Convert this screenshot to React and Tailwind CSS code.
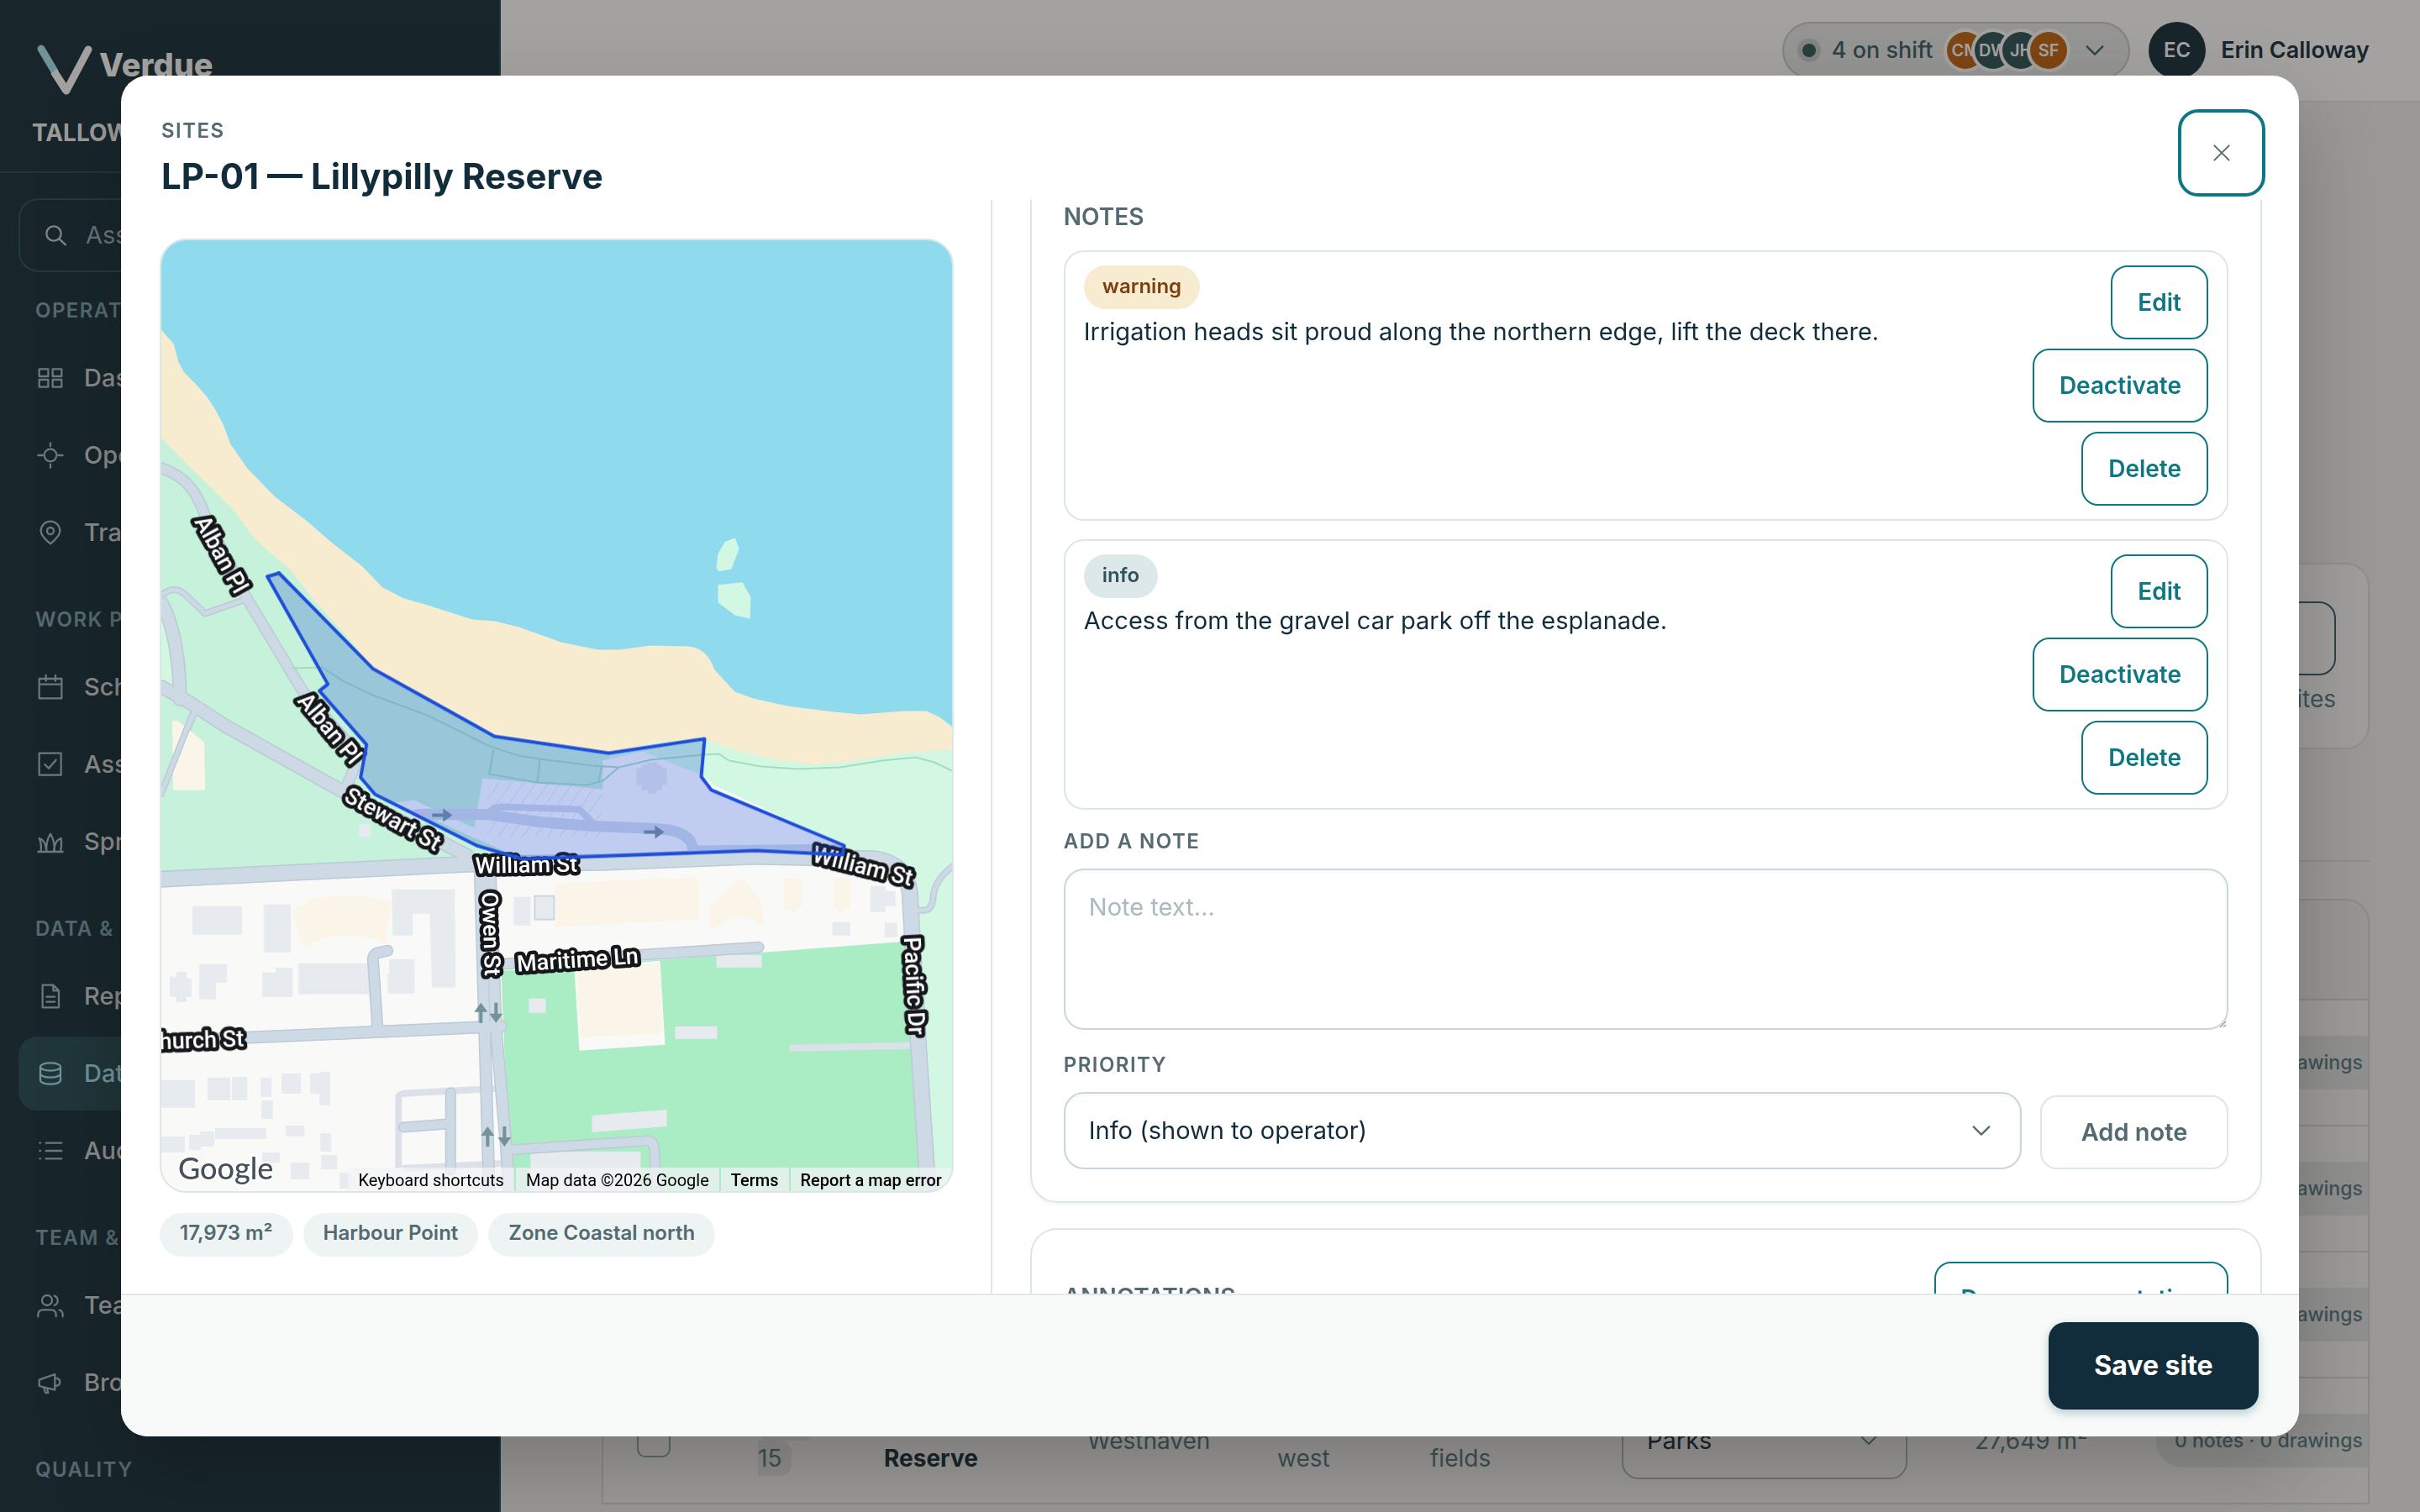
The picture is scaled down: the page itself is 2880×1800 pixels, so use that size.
import React, { useState } from 'react';

// Sidebar navigation, grouped by section.
const navGroups = [
  { label: 'OPERATIONS', items: [['Dashboard', 'grid'], ['Operators', 'target'], ['Tracking', 'pin']] },
  { label: 'WORK PLANNING', items: [['Schedule', 'calendar'], ['Assignments', 'check'], ['Spraying', 'grass']] },
  { label: 'DATA & REPORTS', items: [['Reports', 'file'], ['Data', 'database'], ['Audit', 'list']] },
  { label: 'TEAM & COMMS', items: [['Team', 'users'], ['Broadcasts', 'horn']] },
  { label: 'QUALITY', items: [] },
];

const iconPaths = {
  search: 'M10.5 4a6.5 6.5 0 1 0 0 13a6.5 6.5 0 0 0 0-13zM15.5 15.5L21 20.5',
  grid: 'M2 4h8v6.5H2zM14 4h8v6.5h-8zM2 13.5h8V20H2zM14 13.5h8V20h-8z',
  target: 'M12 6.5a5.5 5.5 0 1 0 0 11a5.5 5.5 0 0 0 0-11zM12 1v3M12 20v3M1 12h4M19 12h4',
  pin: 'M12 22C7 18 3.5 14.500 3.500 10.500a8.500 8.500 0 0 1 17 0C20.500 14.500 17 18 12 22zM12 7.500a3 3 0 1 0 0 6a3 3 0 0 0 0-6z',
  calendar: 'M2 4.500h20V22H2zM2 9.500h20M8 1.500v5M16.500 1.500v5',
  check: 'M2 2h19.500v19.500H2zM7 12l3.500 3.500L17 8',
  grass: 'M1 21h22M3.500 21C4 16 3.500 12 2 9c4 1 6 5 6.500 12M8.500 21c-.5-6 1-12 3.500-16c2.500 4 4 10 3.500 16M15 21c.5-7 3-11 6.500-12c.5 4 .5 8-.5 12',
  file: 'M5 2h9.500l5 5v15H5zM14.500 2v5h5M8.500 12.500h7.500M8.500 17h7.500',
  database: 'M3 6a9 3.500 0 0 1 18 0a9 3.500 0 0 1-18 0zM3 6v12c0 2 4 3.500 9 3.500s9-1.500 9-3.500V6M3 12c0 2 4 3.500 9 3.500s9-1.500 9-3.500',
  list: 'M8 5h14M8 12h14M8 19h14M2.500 5h.5M2.500 12h.5M2.500 19h.5',
  users: 'M9 3a4.500 4.500 0 1 0 0 9a4.500 4.500 0 0 0 0-9zM1 22v-2a4 4 0 0 1 4-4h8a4 4 0 0 1 4 4v2M15.500 3.500a4.500 4.500 0 0 1 0 8.500M23 22v-2a4 4 0 0 0-3-3.800',
  horn: 'M2 9.500L16 4.500v14L2 15zM16 8c3 0 4.500 1.500 4.500 3.500S19 15 16 15M6 16l1.500 5H10l-1-4',
  chevron: 'M5 8.500l7 7l7-7',
  close: 'M4 4l16 16M20 4L4 20',
};

function Icon({ name, className }) {
  return (
    <svg
      viewBox="0 0 24 24"
      className={className}
      fill="none"
      stroke="currentColor"
      strokeWidth="1.7"
      strokeLinecap="round"
      strokeLinejoin="round"
      aria-hidden="true"
    >
      <path d={iconPaths[name]} />
    </svg>
  );
}

function Sidebar() {
  return (
    <aside className="w-[596px] shrink-0 bg-[#18262c] border-r-2 border-[#1c373d] text-[#8a8e8e]">
      <div className="h-[206px] border-b-2 border-[#22353b] pl-[38px] pt-12">
        <div className="flex items-center">
          <svg viewBox="0 0 72 66" className="w-[72px] h-[66px]" fill="none" strokeLinecap="round" strokeLinejoin="round" strokeWidth="9">
            <path d="M41 60L67 11M41 60L28 40" stroke="#a3a2a1" />
            <path d="M11 10L27 37" stroke="#6f9299" strokeLinecap="round" />
            <path d="M26 37L41 60" stroke="#a3a2a1" strokeLinecap="butt" />
          </svg>
          <span className="ml-2 text-[38px] leading-[48px] font-extrabold text-[#a3a2a1] -mt-2">Verdue</span>
        </div>
        <div className="mt-7 text-[28px] leading-8 font-bold text-[#9c9b9a]">TALLOWWOOD</div>
      </div>
      <div className="mx-[22px] mt-[30px] h-[88px] rounded-[24px] border-2 border-[#223a40] flex items-center gap-5 pl-[26px]">
        <Icon name="search" className="w-8 h-8 text-[#838787]" />
        <input
          type="text"
          aria-label="Search"
          placeholder="Assets, sites, people"
          className="flex-1 min-w-0 bg-transparent text-[29px] placeholder:text-[#6b7375]"
        />
      </div>
      <nav className="px-[22px] -mt-[14px]">
        {navGroups.map((group) => (
          <div key={group.label}>
            <h3 className="pt-[46px] pb-[22px] pl-5 text-[24px] leading-7 font-semibold tracking-[0.06em] text-[#566a6f]">
              {group.label}
            </h3>
            <div className="flex flex-col gap-1">
              {group.items.map(([name, icon]) => (
                <a
                  key={name}
                  href="#"
                  className={
                    name === 'Data'
                      ? 'flex items-center gap-6 h-[88px] pl-[22px] rounded-[22px] text-[29px] font-medium bg-[#20363a] text-[#6f9299]'
                      : 'flex items-center gap-6 h-[88px] pl-[22px] rounded-[22px] text-[29px] font-medium text-[#8a8b8a]'
                  }
                >
                  <Icon name={icon} className={name === 'Data' ? 'w-8 h-8' : 'w-8 h-8 text-[#6d797c]'} />
                  {name}
                </a>
              ))}
            </div>
          </div>
        ))}
      </nav>
    </aside>
  );
}

function Topbar() {
  const crew = [['CM', true], ['DW', false], ['JH', false], ['SF', true]];
  return (
    <header className="h-[122px] border-b-2 border-[#949392] bg-[#a3a2a0] flex items-center justify-end gap-[22px] pr-[60px]">
      <button type="button" className="h-[68px] w-[414px] rounded-full border-2 border-[#818382] bg-[#959694] flex items-center pl-4">
        <span className="w-7 h-7 rounded-full bg-[#838483] flex items-center justify-center">
          <span className="w-4 h-4 rounded-full bg-[#26403f]" />
        </span>
        <span className="ml-2 w-[130px] text-[27px] font-medium text-[#2d4246] whitespace-nowrap">4 on shift</span>
        <span className="ml-3 flex">
          {crew.map(([initials, orange]) => (
            <span
              key={initials}
              className={
                orange
                  ? 'w-11 h-11 -mr-[11px] rounded-full ring-4 ring-[#a3a2a0] bg-[#7f4513] overflow-hidden flex items-center justify-center text-[20px] font-semibold text-[#a3a2a0]'
                  : 'w-11 h-11 -mr-[11px] rounded-full ring-4 ring-[#a3a2a0] bg-[#263b3b] overflow-hidden flex items-center justify-center text-[20px] font-semibold text-[#a3a2a0]'
              }
            >
              {initials}
            </span>
          ))}
        </span>
        <Icon name="chevron" className="ml-7 w-8 h-8 text-[#2d4246]" />
      </button>
      <div className="flex items-center gap-[18px]">
        <span className="w-[68px] h-[68px] rounded-full bg-[#18262c] flex items-center justify-center text-[24px] font-semibold text-[#a3a2a0]">EC</span>
        <span className="text-[27px] font-semibold text-[#18262c]">Erin Calloway</span>
      </div>
    </header>
  );
}

const rows = [
  { code: ['WH-', '12'], name: ['Wattle', 'Reserve'], suburb: 'Westhaven', zone: ['Coastal', 'west'], kind: ['Open', 'fields'], area: '14,210 m²' },
  { code: ['WH-', '13'], name: ['Banksia', 'Reserve'], suburb: 'Westhaven', zone: ['Coastal', 'west'], kind: ['Open', 'fields'], area: '9,884 m²' },
  { code: ['WH-', '14'], name: ['Heron', 'Reserve'], suburb: 'Westhaven', zone: ['Coastal', 'west'], kind: ['Open', 'fields'], area: '21,035 m²' },
  { code: ['WH-', '15'], name: ['Westhaven', 'Reserve'], suburb: 'Westhaven', zone: ['Coastal', 'west'], kind: ['Sports', 'fields'], area: '27,649 m²' },
];

function TwoLines({ lines }) {
  return (
    <>
      {lines[0]}
      <br />
      {lines[1]}
    </>
  );
}

// Page that sits dimmed behind the dialog.
function SitesPage() {
  return (
    <main className="flex-1 bg-[#9a9998] pl-[120px] pr-[60px]">
      <section className="mt-[548px] h-[222px] rounded-[28px] border-2 border-[#8f8f8d] bg-[#9f9e9c] px-[38px] pt-11 flex flex-col items-end">
        <button type="button" className="h-[88px] w-[220px] rounded-[20px] border-2 border-[#2a4347]" />
        <p className="mt-2 text-[28px] leading-10 text-[#3e5256]">128 sites</p>
      </section>
      <hr className="mt-[132px] border-t-2 border-[#8d8d8b]" />
      <div className="mt-11 rounded-t-[28px] border-2 border-b-0 border-[#8b8a88] bg-[#9c9b99] overflow-hidden">
        <table className="w-full table-fixed text-[28px] leading-[42px] text-[#3e5256]">
          <colgroup>
            <col className="w-[140px]" />
            <col className="w-[194px]" />
            <col className="w-[242px]" />
            <col className="w-[226px]" />
            <col className="w-[182px]" />
            <col className="w-[228px]" />
            <col className="w-[380px]" />
            <col className="w-[256px]" />
            <col />
          </colgroup>
          <thead>
            <tr className="h-[118px] border-b-2 border-[#8b8a88] bg-[#979694]">
              {['', 'Code', 'Name', 'Suburb', 'Zone', 'Type', 'Crew', 'Area', ''].map((title, i) => (
                <th key={i} className="text-left font-medium">{title}</th>
              ))}
            </tr>
          </thead>
          <tbody>
            {rows.map((row) => (
              <tr key={row.area} className="h-[150px] border-b-2 border-[#8b8a88]">
                <td>
                  <input
                    type="checkbox"
                    aria-label={row.code.join('')}
                    className="appearance-none block ml-10 w-10 h-10 rounded-[10px] border-2 border-[#5f6c6f]"
                  />
                </td>
                <td className="pl-11">
                  <span className="bg-[#929190] rounded-[14px] pr-3 py-1"><TwoLines lines={row.code} /></span>
                </td>
                <td className="font-bold text-[#18262c]"><TwoLines lines={row.name} /></td>
                <td>{row.suburb}</td>
                <td><TwoLines lines={row.zone} /></td>
                <td><TwoLines lines={row.kind} /></td>
                <td>
                  <span className="relative flex items-center w-[340px]">
                    <select aria-label="Crew" className="appearance-none w-full h-[92px] pl-7 rounded-[20px] border-2 border-[#6f7677] text-[29px] text-[#18262c]">
                      <option>Parks</option>
                    </select>
                    <Icon name="chevron" className="absolute right-8 w-7 h-7" />
                  </span>
                </td>
                <td className="pl-10">{row.area}</td>
                <td>
                  <span className="flex items-center h-16 rounded-l-[32px] bg-[#90908e] pl-[22px] text-[23px] font-medium whitespace-nowrap">
                    0 notes · 0 drawings
                  </span>
                </td>
              </tr>
            ))}
          </tbody>
        </table>
      </div>
    </main>
  );
}

// Building footprints as x, y, width, height.
const buildings = [
  [229, 1078, 59, 34], [314, 1076, 32, 57], [237, 1147, 20, 42], [257, 1147, 13, 22], [202, 1162, 10, 24], [210, 1156, 12, 36], [221, 1164, 7, 22],
  [312, 1157, 36, 29], [328, 1151, 20, 35], [355, 1146, 84, 37], [463, 1141, 30, 24], [461, 1158, 32, 24], [611, 1067, 20, 34],
  [1035, 1054, 18, 31], [1050, 1060, 15, 18], [990, 1097, 21, 16], [1052, 1098, 15, 17], [852, 1136, 54, 15], [629, 1188, 20, 17],
  [803, 1221, 50, 15], [192, 1285, 40, 33], [247, 1282, 27, 27], [276, 1281, 18, 28], [310, 1282, 13, 23], [335, 1277, 23, 24],
  [369, 1277, 14, 24], [380, 1275, 13, 40], [311, 1309, 14, 22], [192, 1352, 28, 19], [225, 1350, 14, 18], [238, 1346, 17, 18],
  [256, 1342, 61, 13], [340, 1339, 22, 13], [381, 1348, 13, 22], [312, 1371, 21, 12], [346, 1383, 22, 20], [382, 1374, 19, 17],
  [404, 1395, 13, 19], [427, 980, 14, 16], [631, 1370, 131, 50],
];

// Street centre lines with their widths.
const streets = [
  ['M192 557C225 568 236 590 246 618L292 709L361 824L415 885Q424 900 420 918L411 938', 11],
  ['M192 817L224 835L267 863L405 940L556 1018', 14],
  ['M192 717C208 745 214 790 214 832', 14],
  ['M192 1046L555 1028L717 1026L899 1019L1042 1022Q1078 1028 1082 1062L1092 1239L1104 1420', 17],
  ['M571 1035L582 1420M583 1040L590 1226L602 1363L606 1420', 12],
  ['M192 1239L596 1221', 12],
  ['M449 1222L444 1146Q442 1134 452 1133L461 1131', 11],
  ['M596 1147L902 1127', 11],
  ['M606 1368L770 1357Q777 1357 778 1366L781 1420', 10],
  ['M536 1300V1392M480 1341L532 1337', 10],
  ['M194 707Q208 696 221 708L244 730L287 715M231 849L224 866M229 850L192 944M1092 1083H1100Q1109 1082 1110 1066Q1112 1046 1134 1030', 5],
];

const labels = [
  ['Alban Pl', 263, 660, 61], ['Alban Pl', 392, 867, 50], ['Stewart St', 467, 975, 29], ['William St', 626, 1029, -1],
  ['William St', 1026, 1031, 14], ['Owen St', 584, 1111, 88], ['Maritime Ln', 687, 1142, -4], ['Pacific Dr', 1087, 1173, 87],
  ['Church St', 231, 1238, -2],
];

// up, down and right direction markers
const arrows = [[572, 1205, -90], [590, 1205, 90], [580, 1352, -90], [600, 1352, 90], [526, 970, 0], [778, 990, 0]];

const sitePath =
  'M318 686L332 682L444 796L588 876L724 896L838 879L834 924L846 940L1004 1006L1002 1017L899 1012L621 1022L567 1006L446 945L429 925L436 886L380 822L390 814Z';

function SiteMap() {
  return (
    <svg viewBox="192 286 940 1132" preserveAspectRatio="xMinYMin slice" className="block w-full h-full" role="img" aria-label="Site map">
      <defs>
        <pattern id="bays" width="12" height="14" patternUnits="userSpaceOnUse" patternTransform="rotate(35)">
          <path d="M0 0V14" stroke="#dfe3ec" strokeWidth="2" />
        </pattern>
      </defs>
      <rect x="192" y="286" width="960" height="1160" fill="#90daee" />
      <path
        fill="#f7ebd0"
        d="M190 390L207 410L212 430L219 443L233 457L246 472L256 487L266 506L274 528L294 557L327 591L365 620L395 646L431 674L455 699L480 712L505 719L562 737L589 739L617 746L667 764L711 773L736 773L774 768L817 769Q840 769 850 797L874 823L896 831L936 840L992 847L1024 850L1074 846L1102 846L1117 853L1150 878V1446H190Z"
      />
      <path
        fill="#d2f8e4"
        d="M588 876L724 896L783 883L836 879L880 894L917 903L967 910L1011 906L1074 896L1150 890V1446H588Z"
      />
      <path
        fill="#c6f1db"
        d="M190 519L225 555L249 578L277 606L302 640L327 663L344 676L374 715L412 756L442 794L588 876L724 896L717 1030L190 1050Z"
      />
      <path fill="#d2f8e4" d="M190 725Q206 760 207 826L190 815Z" />
      <path fill="#f9faf8" d="M190 1046L574 1028L899 1019L1042 1022Q1080 1030 1083 1070L1104 1446H190Z" />
      <path fill="#f9faf8" d="M574 926L717 939V905L764 894L836 923L850 935L1004 1006V1020L621 1022L470 955L492 952L564 985Z" />
      <path fill="#f9faf8" d="M834 924L850 935L930 972L846 940Z" />
      <path fill="#aaecc4" d="M596 1155L855 1137L1078 1120L1097 1446H608Z" />
      <path fill="#fbf5e9" d="M205 858H212L243 883L244 940H206Z" />
      <path fill="#fbf5e9" d="M347 1083L374 1069Q420 1060 466 1073L458 1123Q408 1100 361 1128ZM660 1051L830 1043L832 1094L662 1103ZM877 1047H885L907 1075V1103L896 1095L876 1090L845 1106L844 1078ZM931 1045H953V1080L942 1085L931 1080ZM991 1044H1011V1080L1001 1085L991 1080Z" />
      <path fill="#f9faf8" d="M683 1152L785 1143L791 1243L689 1250Z" />
      <path fill="#fbf5e9" d="M685 1155L785 1146L788 1230L691 1234Z" />
      <g fill="#e7eaef">
        {buildings.map(([x, y, w, h]) => (
          <rect key={`${x}-${y}`} x={x} y={y} width={w} height={h} />
        ))}
        <path d="M466 1058H541L542 1175H514L511 1087H491V1113H467ZM704 1327L793 1320V1340L704 1347Z" />
        <rect x="636" y="1066" width="23" height="28" stroke="#ccd7e2" strokeWidth="2" />
      </g>
      <rect x="580" y="930" width="136" height="66" fill="url(#bays)" />
      <path d="M757 914h6v-4h6v-3h12v3h6v4h6v20h-6v6h-6v4h-10v-4h-8v-6h-6z" fill="#e7eaef" />
      <path d="M474 1390V1306Q474 1302 480 1301L592 1295M479 1390L600 1384M939 1247L1086 1244" fill="none" stroke="#dce0e8" strokeWidth="8" />
      <g fill="none" strokeLinejoin="round" strokeLinecap="round">
        {streets.map(([d, w]) => (
          <path key={d} d={d} stroke="#bccad6" strokeWidth={w + 3} />
        ))}
        {streets.map(([d, w]) => (
          <path key={d} d={d} stroke="#cddae5" strokeWidth={w} />
        ))}
        <path d="M496 969L580 969L642 978L705 983L780 986Q824 988 824 1012" stroke="#d0d9ea" strokeWidth="13" />
        <path d="M580 970Q584 960 598 960L689 963L708 982M824 1010L1002 1008" stroke="#d0d9ea" strokeWidth="8" />
      </g>
      <path
        fill="none"
        stroke="#a5dcc0"
        strokeWidth="2"
        d="M347 795L383 794L411 812L446 828L508 851L549 871L580 887L617 899L642 903L705 911L736 913L774 904L836 898L855 897L867 905L905 912L949 915L999 913L1049 905L1089 901L1111 907L1134 918M587 892L582 921L639 931L699 934L717 929L736 913M642 904L639 931M716 911L712 929"
      />
      <path fill="#d2f8e4" d="M874 640L879 653L870 677L855 680L852 676L854 659L862 645ZM854 696L883 693L893 711L892 736L874 732L854 717Z" />
      {arrows.map(([x, y, angle]) => (
        <path key={`${x}-${y}`} transform={`translate(${x} ${y}) rotate(${angle})`} d="M-12 -2H1V-8L12 0L1 8V2H-12Z" fill="#75919a" />
      ))}
      <g fontFamily="Roboto, sans-serif" fontSize="27" fontWeight="500" fill="#fff" stroke="#15171a" strokeWidth="9" strokeLinejoin="round" paintOrder="stroke" textAnchor="middle">
        {labels.map(([text, x, y, angle]) => (
          <text key={`${text}-${x}`} transform={`translate(${x} ${y}) rotate(${angle})`} dy="9">{text}</text>
        ))}
      </g>
      <path d={sitePath} fill="#1d4ed8" fillOpacity="0.26" stroke="#1d4ed8" strokeWidth="4" strokeLinejoin="round" />
    </svg>
  );
}

function MapPanel() {
  return (
    <div className="w-2/5 shrink-0 border-r-2 border-[#dce6e9] pt-[46px] pb-11 pl-[46px] pr-11 flex flex-col">
      <div className="relative flex-1 min-h-0 rounded-[32px] border-2 border-[#dce6e9] overflow-hidden">
        <SiteMap />
        <span className="absolute left-5 bottom-1.5 font-['Lato'] text-[36px] leading-[44px] font-medium text-[#44505a] [paint-order:stroke] [-webkit-text-stroke:4px_white]">
          Google
        </span>
        <div className="absolute right-0 bottom-0 flex h-[28px] bg-[#f1f3f5]/75 font-['Roboto'] text-[20px] leading-[30px] text-black">
          <button type="button" className="px-3">Keyboard shortcuts</button>
          <span className="px-3 border-l-2 border-[#aaecc4]">Map data ©2026 Google</span>
          <a href="#" className="px-3 border-l-2 border-[#aaecc4] font-medium">Terms</a>
          <a href="#" className="px-3 border-l-2 border-[#aaecc4] font-medium">Report a map error</a>
        </div>
      </div>
      <div className="mt-6 flex gap-3">
        {['17,973 m²', 'Harbour Point', 'Zone Coastal north'].map((chip) => (
          <span key={chip} className="h-[52px] px-6 rounded-full bg-[#eef4f4] text-[24px] leading-[48px] font-semibold text-[#536a70]">
            {chip}
          </span>
        ))}
      </div>
    </div>
  );
}

function OutlineButton({ children }) {
  return (
    <button type="button" className="h-[88px] px-[30px] rounded-[20px] border-2 border-[#0d7884] text-[28px] font-semibold text-[#0d7884] whitespace-nowrap">
      {children}
    </button>
  );
}

function NoteCard({ kind, text }) {
  return (
    <li className="rounded-[24px] border-2 border-[#dce6e9] px-[22px] py-4 flex justify-between">
      <div>
        <span
          className={
            kind === 'warning'
              ? 'block w-fit h-[52px] px-[22px] rounded-full bg-[#f7ebd0] text-[24px] leading-[50px] font-semibold text-[#7c3f12]'
              : 'block w-fit h-[52px] px-[22px] rounded-full bg-[#dde8ea] text-[24px] leading-[50px] font-semibold text-[#31525c]'
          }
        >
          {kind}
        </span>
        <p className="mt-1 text-[29px] leading-[46px] text-[#112c3a]">{text}</p>
      </div>
      <div className="flex flex-col items-end gap-[11px]">
        <OutlineButton>Edit</OutlineButton>
        <OutlineButton>Deactivate</OutlineButton>
        <OutlineButton>Delete</OutlineButton>
      </div>
    </li>
  );
}

function NotesPanel() {
  const [noteText, setNoteText] = useState('');
  const [priority, setPriority] = useState('info');

  return (
    <div className="flex-1 min-w-0 overflow-hidden pl-[45px] pr-11">
      <section className="rounded-b-[32px] border-2 border-t-0 border-[#dce6e9] px-[38px] pb-[38px] shadow-[0_2px_4px_rgba(17,44,58,0.05)]">
        <h3 className="mb-5 text-[28px] leading-10 font-semibold text-[#536a70]">NOTES</h3>
        <ul className="flex flex-col gap-[22px]">
          <NoteCard kind="warning" text="Irrigation heads sit proud along the northern edge, lift the deck there." />
          <NoteCard kind="info" text="Access from the gravel car park off the esplanade." />
        </ul>
        <label htmlFor="note-text" className="block mt-[22px] mb-4 text-[24px] leading-8 font-semibold tracking-[0.06em] text-[#536a70]">
          ADD A NOTE
        </label>
        <textarea
          id="note-text"
          value={noteText}
          onChange={(e) => setNoteText(e.target.value)}
          placeholder="Note text…"
          className="block w-full h-[192px] px-7 py-[22px] rounded-[24px] border-2 border-[#c9d6e2] text-[29px] leading-[44px] text-[#112c3a] placeholder:text-[#a9babd] shadow-[inset_0_2px_4px_rgba(17,44,58,0.04)]"
        />
        <label htmlFor="note-priority" className="block mt-[26px] mb-4 text-[24px] leading-8 font-semibold tracking-[0.06em] text-[#536a70]">
          PRIORITY
        </label>
        <div className="flex items-end gap-[22px]">
          <div className="relative flex-1 flex items-center">
            <select
              id="note-priority"
              value={priority}
              onChange={(e) => setPriority(e.target.value)}
              className="appearance-none w-full h-[92px] pl-7 rounded-[24px] border-2 border-[#c9d6e2] bg-white text-[29px] text-[#112c3a] shadow-[inset_0_2px_4px_rgba(17,44,58,0.04)]"
            >
              <option value="info">Info (shown to operator)</option>
              <option value="warning">Warning</option>
            </select>
            <Icon name="chevron" className="absolute right-8 w-8 h-8 text-[#536a70] pointer-events-none" />
          </div>
          <button type="button" className="h-[88px] w-[224px] rounded-[20px] border-2 border-[#dce6e9] text-[29px] font-semibold text-[#536a70]">
            Add note
          </button>
        </div>
      </section>
      <section className="mt-[30px] rounded-t-[32px] border-2 border-b-0 border-[#dce6e9] px-[38px] pt-[38px] flex items-start justify-between">
        <h3 className="pt-[22px] text-[28px] leading-10 font-semibold text-[#536a70]">ANNOTATIONS</h3>
        <OutlineButton>Draw new annotation</OutlineButton>
      </section>
    </div>
  );
}

function SiteDialog() {
  return (
    <div className="fixed inset-0 flex items-center justify-center">
      <div
        role="dialog"
        aria-modal="true"
        aria-labelledby="dialog-title"
        className="w-[90vw] h-[90vh] rounded-[32px] bg-white overflow-hidden flex flex-col shadow-[0_40px_100px_rgba(0,0,0,0.22)]"
      >
        <header className="h-[148px] shrink-0 pt-10 pl-12 pr-10 flex justify-between items-start">
          <div className="pt-2.5">
            <p className="text-[24px] leading-8 font-semibold tracking-[0.06em] text-[#536a70]">SITES</p>
            <h2 id="dialog-title" className="mt-3 text-[42px] leading-[52px] font-bold text-[#112c3a]">LP-01 — Lillypilly Reserve</h2>
          </div>
          <button
            type="button"
            aria-label="Close"
            className="w-[104px] h-[104px] rounded-[24px] border-4 border-[#0d7884] flex items-center justify-center text-[#536a70]"
          >
            <Icon name="close" className="w-[26px] h-[26px]" />
          </button>
        </header>
        <div className="flex-1 min-h-0 flex">
          <MapPanel />
          <NotesPanel />
        </div>
        <footer className="h-[170px] shrink-0 border-t-2 border-[#e1e8ec] bg-[#f8faf9] pt-8 pr-12 flex justify-end items-start">
          <button type="button" className="h-[104px] w-[250px] rounded-[20px] bg-[#112c3a] text-[32px] font-bold text-white shadow-[0_4px_12px_rgba(13,90,110,0.3)]">
            Save site
          </button>
        </footer>
      </div>
    </div>
  );
}

export default function App() {
  return (
    <div className="h-screen overflow-hidden flex font-['Inter',sans-serif]">
      <Sidebar />
      <div className="flex-1 min-w-0 flex flex-col">
        <Topbar />
        <SitesPage />
      </div>
      <SiteDialog />
    </div>
  );
}
